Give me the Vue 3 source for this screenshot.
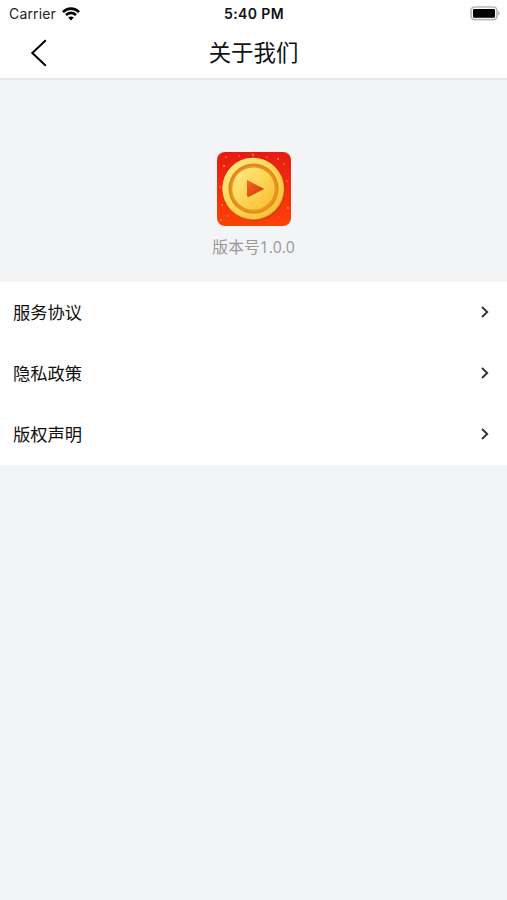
<template>
  <div class="about-page">
    <div class="status-bar">
      <div class="status-left">
        <span>Carrier</span>
        <svg class="wifi" width="18" height="14" viewBox="0 0 18 14">
          <path d="M.9 5.1C5.4 .4 12.6 .4 17.1 5.1" />
          <path d="M4 8C6.9 5.1 11.1 5.1 14 8" />
          <path class="wifi-dot" d="M6.2 10.5Q9 8.3 11.8 10.5L9 13.5Z" />
        </svg>
      </div>
      <div class="status-time">5:40 PM</div>
      <svg class="battery" width="31" height="15" viewBox="0 0 31 15">
        <rect x="1" y="1" width="26" height="12.6" rx="3.6" fill="#fff" stroke="#b9b9b9" stroke-width="1.7" />
        <rect x="3" y="3" width="22" height="8.8" rx="1.2" fill="#000" />
        <path d="M28.4 5.2Q31.4 7.3 28.4 9.4Z" fill="#aaa" />
      </svg>
    </div>

    <div class="nav-bar">
      <svg class="nav-back" width="18" height="28" viewBox="0 0 18 28" @click="goBack">
        <path d="M15.8 1.2L2.3 14L15.8 26.8" />
      </svg>
      <h1>关于我们</h1>
    </div>

    <div class="app-info">
      <svg class="app-logo" width="74" height="74" viewBox="0 0 74 74">
        <defs>
          <linearGradient id="logoBg" x1="0" y1="0" x2="0" y2="1">
            <stop offset="0" stop-color="#e51b13" />
            <stop offset="1" stop-color="#ff4107" />
          </linearGradient>
          <linearGradient id="coin" x1="0" y1="0" x2="1" y2="1">
            <stop offset="0" stop-color="#ffeb8c" />
            <stop offset="0.5" stop-color="#fed654" />
            <stop offset="1" stop-color="#f8b82c" />
          </linearGradient>
          <linearGradient id="arrow" x1="0" y1="0" x2="1" y2="1">
            <stop offset="0" stop-color="#f56b20" />
            <stop offset="1" stop-color="#e52b0c" />
          </linearGradient>
        </defs>
        <rect width="74" height="74" rx="8" fill="url(#logoBg)" />
        <g fill="#ff9838">
          <circle v-for="(s, i) in sparks" :key="i" :cx="s.x" :cy="s.y" :r="s.r" />
        </g>
        <circle cx="37.3" cy="38" r="30.8" fill="#bd3507" />
        <circle cx="36.4" cy="37.1" r="31" fill="#e0901a" />
        <circle cx="36" cy="36.3" r="30.6" fill="url(#coin)" />
        <circle cx="36.5" cy="36.6" r="25" fill="#df8418" />
        <circle cx="36.8" cy="37" r="23.6" fill="#e8941f" />
        <circle cx="36.5" cy="36.6" r="21.2" fill="url(#coin)" />
        <path d="M30.6 28.8L47.4 37L30.6 45.4Z" fill="#bd6515" />
        <path d="M30 28L46 36.4L30 44.4Z" fill="url(#arrow)" />
      </svg>
      <p class="version">版本号<span>1.0.0</span></p>
    </div>

    <div class="menu-list">
      <div class="menu-item" v-for="item in menus" :key="item">
        <span>{{ item }}</span>
        <svg width="10" height="14" viewBox="0 0 10 14">
          <path d="M2 2L7.2 7L2 12" />
        </svg>
      </div>
    </div>
  </div>
</template>

<script setup>
const menus = ['服务协议', '隐私政策', '版权声明']

const sparks = [
  { x: 9, y: 5, r: 0.8 },
  { x: 22, y: 4, r: 0.7 },
  { x: 36, y: 2.8, r: 1 },
  { x: 50, y: 5, r: 0.7 },
  { x: 61, y: 7, r: 1 },
  { x: 67, y: 12, r: 0.8 },
  { x: 7, y: 14, r: 1 },
  { x: 3, y: 35, r: 0.7 },
  { x: 5, y: 53, r: 0.9 },
  { x: 11, y: 64, r: 0.8 },
  { x: 4, y: 68, r: 1 },
  { x: 70, y: 29, r: 0.8 },
  { x: 71, y: 56, r: 0.9 },
  { x: 62, y: 65, r: 0.7 }
]

function goBack() {
  window.history.back()
}
</script>

<style>
body {
  margin: 0;
  background: #f2f4f6;
}
</style>

<style scoped>
.about-page {
  min-height: 900px;
  background: #f2f4f6;
  color: #111;
  font-family: 'Liberation Sans', 'Noto Sans CJK SC', sans-serif;
}
.status-bar {
  display: grid;
  grid-template-columns: 1fr auto 1fr;
  align-items: center;
  height: 27px;
  padding: 0 6px 0 9px;
  background: #fff;
  font-family: Inter, sans-serif;
  font-size: 14px;
}
.status-left {
  display: flex;
  align-items: center;
  gap: 6px;
  color: #222;
  letter-spacing: 0.15px;
}
.wifi {
  fill: none;
  stroke: #000;
  stroke-width: 2.6;
}
.wifi .wifi-dot {
  fill: #000;
  stroke: none;
}
.status-time {
  margin-right: 2px;
  font-weight: 600;
  letter-spacing: 0.4px;
}
.battery {
  justify-self: end;
}
.nav-bar {
  display: grid;
  grid-template-columns: 1fr auto 1fr;
  align-items: center;
  box-sizing: border-box;
  height: 53px;
  padding: 0 30px;
  background: #fff;
  border-bottom: 2px solid #e7e8e9;
}
.nav-back {
  fill: none;
  stroke: #000;
  stroke-width: 2;
}
.nav-bar h1 {
  margin: 2px 0 0;
  font-size: 22.4px;
  font-weight: 400;
  line-height: 32px;
}
.app-info {
  display: flex;
  flex-direction: column;
  align-items: center;
  box-sizing: border-box;
  height: 202px;
  padding-top: 72px;
}
.version {
  margin: 9px 0 0;
  color: #999;
  font-family: 'Open Sans', 'Noto Sans CJK SC', sans-serif;
  font-size: 15.8px;
  line-height: 24px;
}
.version span {
  letter-spacing: -0.1px;
}
.menu-list {
  background: #fff;
}
.menu-item {
  display: flex;
  align-items: center;
  justify-content: space-between;
  box-sizing: border-box;
  height: 61px;
  padding: 0 17px 2px 13px;
  font-size: 17.3px;
}
.menu-item svg {
  fill: none;
  stroke: #333;
  stroke-width: 1.9;
}
</style>
